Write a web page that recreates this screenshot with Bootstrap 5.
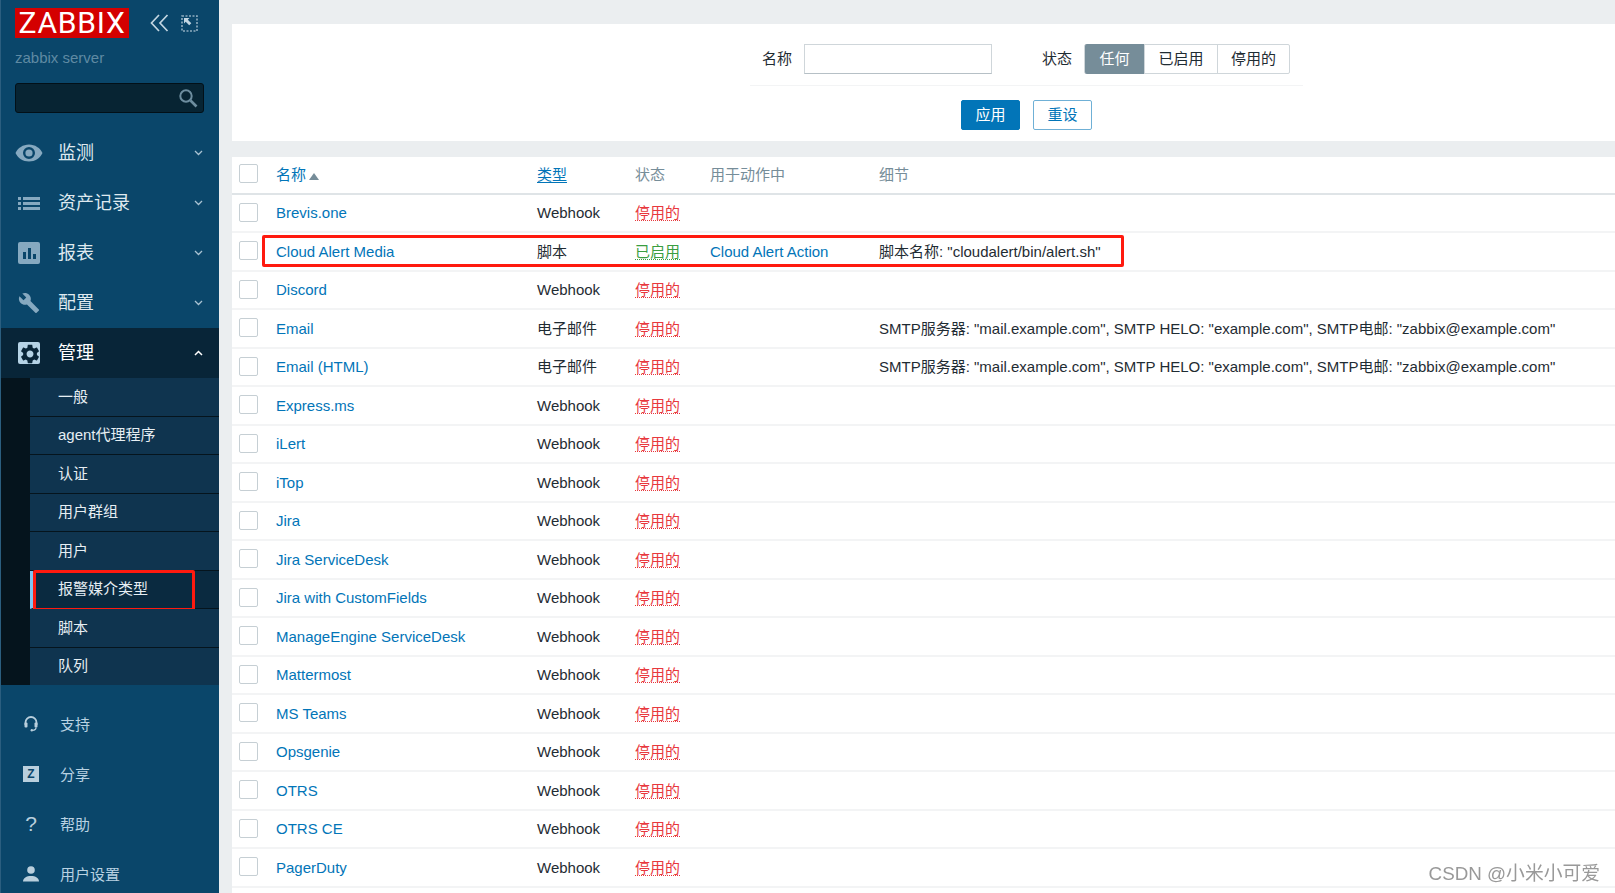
<!DOCTYPE html>
<html lang="zh-CN">
<head>
  <meta charset="UTF-8" />
  <meta name="viewport" content="width=device-width, initial-scale=1.0" />
  <title>报警媒介类型</title>
  <link href="https://cdn.jsdelivr.net/npm/bootstrap@5.3.2/dist/css/bootstrap.min.css" rel="stylesheet">
  <style>
    html, body { height: 893px; overflow: hidden; }
    body { background: #ebeef0; color: #1f2c33; font: 15px/20px "Liberation Sans", "Noto Sans CJK SC", sans-serif; }
    a { text-decoration: none; color: #0275b8; }

    /* sidebar */
    .side { width: 219px; height: 893px; flex: none; background: #0a466a; border-left: 1px solid #2b5e7f; overflow: hidden; }
    .side-top { padding: 8px 15px 0 14px; }
    .logo { width: 114px; height: 30px; flex: none; background: #d40000; color: #fff; font: 400 30px/30px Roboto, "Liberation Sans", sans-serif; text-align: center; letter-spacing: .8px; }
    .ico-collapse { margin-left: 21px; }
    .ico-expand { margin-left: 12px; }
    .server-name { color: #5f8aa3; font-size: 15px; margin-top: 10px; }
    .side-search { height: 30px; margin-top: 15px; background: #072433; border: 1px solid #021018; border-radius: 3px; padding-right: 4px; }
    .side-nav { margin-top: 15px; }
    .menu-item { height: 50px; color: #dfe9ef; font-size: 18px; padding-left: 57px; padding-right: 16px; position: relative; }
    .menu-item.open { background: #082538; color: #fff; }
    .menu-ico { position: absolute; left: 17px; top: 14px; width: 22px; height: 22px; }
    .menu-ico.wide { left: 14px; width: 28px; }
    .sub-wrap { background: #05141d; padding-left: 29px; }
    .sub-item { height: 38.5px; background: #0f344f; border-bottom: 1px solid #05141d; color: #e6eef3; padding-left: 28px; position: relative; }
    .sub-item.current { background: #0a2a40; border-left: 3px solid #7fc4f0; padding-left: 25px; }
    .sub-wrap .sub-item:last-child { border-bottom: 0; height: 37.5px; }
    .user-menu { padding-top: 15px; }
    .user-item { height: 50px; color: #b9d2e2; padding-left: 59px; position: relative; }
    .user-ico { position: absolute; left: 22px; top: 16px; width: 16px; height: 16px; }
    .z-box { background: #b9cfdd; color: #0a466a; font: 700 12px/16px "Liberation Sans", sans-serif; text-align: center; }
    .q-mark { color: #b9cfdd; font: 400 21px/16px "Liberation Sans", sans-serif; text-align: center; }

    /* filter */
    .content { padding-left: 13px; min-width: 0; position: relative; }
    .filter-box { margin-top: 24px; height: 117px; background: #fff; padding: 20px 0 0 518px; }
    .filter-inner { width: 553px; }
    .filter-row { height: 42px; border-bottom: 1px solid #f3f4f5; padding-bottom: 11px; }
    .filter-input { width: 188px; height: 30px; margin-left: 12px; margin-right: 50px; border: 1px solid #cfd6da; border-bottom-color: #b6c0c6; background: #fff; }
    .seg-group { margin-left: 12px; border: 1px solid #cfd6da; border-radius: 2px; height: 30px; }
    .seg-btn { padding: 0; height: 28px; line-height: 28px; text-align: center; border-left: 1px solid #cfd6da; color: #1f2c33; }
    .seg-btn:first-child { border-left: 0; width: 59px; background: #768d99; color: #fff; margin: -1px 0; height: 30px; line-height: 30px; border-radius: 2px 0 0 2px; }
    .seg-mid { width: 73px; }
    .seg-last { width: 72px; }
    .filter-actions { margin-top: 14px; padding-left: 211px; gap: 13px; }
    .btn-go, .btn-undo { width: 59px; height: 30px; padding: 0; font-size: 15px; line-height: 28px; border-radius: 2px; border: 1px solid #0275b8; }
    .btn-go { background: #0275b8; color: #fff; }
    .btn-undo { background: #fff; color: #0275b8; border-color: #6fb0d6; }

    /* table */
    .tbl-box { margin-top: 16px; background: #fff; height: 736px; overflow: hidden; }
    .media-tbl { width: 1383px; table-layout: fixed; border-collapse: separate; border-spacing: 0; margin: 0; }
    .media-tbl th, .media-tbl td { padding: 0; background: #fff; box-shadow: none; vertical-align: middle; font-weight: 400; white-space: nowrap; color: #1f2c33; }
    .media-tbl th { height: 37.5px; border-bottom: 2px solid #dfe4e7; color: #768d99; }
    .media-tbl td { height: 38.5px; border-bottom: 2px solid #f3f4f5; padding-top: 1px; }
    .c-check { width: 44px; }
    .c-name { width: 261px; }
    .c-type { width: 98px; }
    .c-state { width: 75px; }
    .c-act { width: 169px; }
    .fake-check { display: block; width: 19px; height: 19px; margin: -2px 0 0 7px; border: 1px solid #c6cfd4; border-radius: 2px; background: #fff; }
    .sort-up { display: inline-block; width: 0; height: 0; margin-left: 3px; border: 5px solid transparent; border-top: 0; border-bottom: 7px solid #768d99; }
    .media-tbl th a.ul { text-decoration: underline; text-decoration-thickness: 1px; text-underline-offset: 2px; }
    .off, .media-tbl td.off { color: #e8383d; }
    .on, .media-tbl td.on { color: #3a9e41; }
    .off span, .on span { text-decoration: underline dotted; text-decoration-thickness: 1px; text-underline-offset: 2px; }

    /* screenshot markup */
    .red-row { position: absolute; left: 43px; top: 235px; width: 862px; height: 32px; border: 3px solid #ff1a0f; border-radius: 2px; pointer-events: none; }
    .red-menu { position: absolute; left: 0; top: -1px; width: 162px; height: 41px; border: 3px solid #ff1a0f; border-radius: 2px; pointer-events: none; }
    .watermark { position: fixed; right: 15px; bottom: 7px; color: #999; font-size: 18.8px; line-height: 24px; }
  </style>
</head>
<body class="d-flex">
  <aside class="side">
    <div class="side-top">
      <div class="d-flex align-items-center">
        <div class="logo">ZABBIX</div>
        <svg class="ico-collapse" width="19" height="20" viewBox="0 0 19 20" fill="none" stroke="#c3d6e2" stroke-width="1.7"><path d="M9 2 1.500 10 9 18M17.500 2 10 10l7.500 8"/></svg>
        <svg class="ico-expand" width="17" height="17" viewBox="0 0 17 17" fill="none"><rect x="1" y="1" width="15" height="15" stroke="#8fadc0" stroke-width="1.600" stroke-dasharray="2 1.500"/><path d="M3 3h5.500L6.800 4.700l3.500 3.500-2.100 2.100-3.500-3.500L3 8.500z" fill="#c3d6e2"/></svg>
      </div>
      <div class="server-name">zabbix server</div>
      <div class="side-search d-flex align-items-center justify-content-end">
        <svg width="22" height="22" viewBox="0 0 22 22" fill="none" stroke="#6d8d9f"><circle cx="9" cy="9" r="5.700" stroke-width="2"/><path d="m13.500 13.500 6 6" stroke-width="2.600"/></svg>
      </div>
    </div>

    <nav class="side-nav">
      <div class="menu-item d-flex align-items-center justify-content-between">
        <svg class="menu-ico wide" viewBox="0 0 28 22" fill="#86a9c0"><path fill-rule="evenodd" d="M14 2.500C8 2.500 2.800 6 .5 11c2.300 5 7.500 8.500 13.500 8.500S25.200 16 27.500 11C25.200 6 20 2.500 14 2.500zM14 17a6 6 0 1 1 0-12 6 6 0 0 1 0 12z"/><circle cx="14" cy="11" r="3.600"/></svg>
        <span>监测</span>
        <svg width="9" height="6" viewBox="0 0 9 6" fill="none" stroke="#a9c2d2" stroke-width="1.300"><path d="m1 1 3.500 3.500L8 1"/></svg>
      </div>
      <div class="menu-item d-flex align-items-center justify-content-between">
        <svg class="menu-ico" viewBox="0 0 22 22" fill="#86a9c0"><rect x="0" y="5" width="3" height="3"/><rect x="5" y="5" width="17" height="3"/><rect x="0" y="10" width="3" height="3"/><rect x="5" y="10" width="17" height="3"/><rect x="0" y="15" width="3" height="3"/><rect x="5" y="15" width="17" height="3"/></svg>
        <span>资产记录</span>
        <svg width="9" height="6" viewBox="0 0 9 6" fill="none" stroke="#a9c2d2" stroke-width="1.300"><path d="m1 1 3.500 3.500L8 1"/></svg>
      </div>
      <div class="menu-item d-flex align-items-center justify-content-between">
        <svg class="menu-ico" viewBox="0 0 22 22"><rect width="22" height="22" rx="2" fill="#86a9c0"/><path d="M5 10h3v7H5zM10 6h3v11h-3zM15 12h3v5h-3z" fill="#0a466a"/></svg>
        <span>报表</span>
        <svg width="9" height="6" viewBox="0 0 9 6" fill="none" stroke="#a9c2d2" stroke-width="1.300"><path d="m1 1 3.500 3.500L8 1"/></svg>
      </div>
      <div class="menu-item d-flex align-items-center justify-content-between">
        <svg class="menu-ico" viewBox="0 0 24 24" fill="#86a9c0"><path d="M22.700 19l-9.100-9.100c.9-2.300.4-5-1.500-6.900-2-2-5-2.400-7.400-1.300L9 6 6 9 1.600 4.700C.4 7.100.9 10.100 2.900 12.100c1.900 1.900 4.600 2.400 6.900 1.500l9.100 9.100c.4.4 1 .4 1.400 0l2.300-2.300c.5-.4.5-1.100.1-1.400z"/></svg>
        <span>配置</span>
        <svg width="9" height="6" viewBox="0 0 9 6" fill="none" stroke="#a9c2d2" stroke-width="1.300"><path d="m1 1 3.500 3.500L8 1"/></svg>
      </div>
      <div class="menu-item open d-flex align-items-center justify-content-between">
        <svg class="menu-ico" viewBox="0 0 22 22"><rect width="22" height="22" rx="2" fill="#b5d3e6"/><g transform="translate(.5 .5) scale(.96)"><path fill="#082538" d="M19.140 12.940c.04-.3.06-.61.06-.94 0-.32-.02-.64-.07-.94l2.030-1.580c.18-.14.23-.41.12-.61l-1.920-3.320c-.12-.22-.37-.29-.59-.22l-2.390.96c-.5-.38-1.030-.7-1.620-.94l-.36-2.540c-.04-.24-.24-.41-.48-.41h-3.840c-.24 0-.43.17-.47.41l-.36 2.540c-.59.24-1.130.57-1.620.94l-2.390-.96c-.22-.08-.47 0-.59.22L2.740 8.870c-.12.21-.08.47.12.61l2.030 1.580c-.05.3-.09.63-.09.94s.02.64.07.94l-2.030 1.580c-.18.14-.23.41-.12.61l1.920 3.320c.12.22.37.29.59.22l2.390-.96c.5.38 1.030.7 1.620.94l.36 2.540c.05.24.24.41.48.41h3.840c.24 0 .44-.17.47-.41l.36-2.540c.59-.24 1.130-.56 1.620-.94l2.390.96c.22.08.47 0 .59-.22l1.920-3.320c.12-.22.07-.47-.12-.61l-2.010-1.580zM12 15.600c-1.980 0-3.600-1.620-3.600-3.600s1.620-3.600 3.600-3.600 3.600 1.620 3.600 3.600-1.620 3.600-3.600 3.600z"/></g></svg>
        <span>管理</span>
        <svg width="9" height="6" viewBox="0 0 9 6" fill="none" stroke="#fff" stroke-width="1.500"><path d="m1 5 3.500-3.500L8 5"/></svg>
      </div>
      <div class="sub-wrap">
        <div class="sub-item d-flex align-items-center">一般</div>
        <div class="sub-item d-flex align-items-center">agent代理程序</div>
        <div class="sub-item d-flex align-items-center">认证</div>
        <div class="sub-item d-flex align-items-center">用户群组</div>
        <div class="sub-item d-flex align-items-center">用户</div>
        <div class="sub-item current d-flex align-items-center">报警媒介类型<div class="red-menu"></div></div>
        <div class="sub-item d-flex align-items-center">脚本</div>
        <div class="sub-item d-flex align-items-center">队列</div>
      </div>
    </nav>

    <div class="user-menu">
      <div class="user-item d-flex align-items-center">
        <svg class="user-ico" viewBox="0 0 16 16" fill="none" stroke="#b9cfdd" stroke-width="1.800"><path d="M2.500 9V6.500a5.500 5.500 0 0 1 11 0V9"/><rect x="1.500" y="6.500" width="3" height="5" rx="1" fill="#b9cfdd" stroke="none"/><rect x="11.500" y="6.500" width="3" height="5" rx="1" fill="#b9cfdd" stroke="none"/><path d="M13 11.500c0 2-1.500 2.800-3.500 2.800" stroke-width="1.300"/><circle cx="8.800" cy="14.300" r="1.200" fill="#b9cfdd" stroke="none"/></svg>
        <span>支持</span>
      </div>
      <div class="user-item d-flex align-items-center">
        <div class="user-ico z-box">Z</div>
        <span>分享</span>
      </div>
      <div class="user-item d-flex align-items-center">
        <div class="user-ico q-mark">?</div>
        <span>帮助</span>
      </div>
      <div class="user-item d-flex align-items-center">
        <svg class="user-ico" viewBox="0 0 16 16" fill="#b9cfdd"><circle cx="8" cy="4" r="3.800"/><path d="M0 15.500c0-3.500 3.500-5.500 8-5.500s8 2 8 5.500z"/></svg>
        <span>用户设置</span>
      </div>
    </div>
  </aside>

  <main class="content flex-grow-1">
    <div class="filter-box">
      <div class="filter-inner">
        <div class="filter-row d-flex align-items-start">
          <span class="ms-2 ps-1 lh-lg">名称</span>
          <input class="filter-input" type="text">
          <span class="lh-lg">状态</span>
          <div class="seg-group d-flex">
            <div class="seg-btn">任何</div>
            <div class="seg-btn seg-mid">已启用</div>
            <div class="seg-btn seg-last">停用的</div>
          </div>
        </div>
        <div class="filter-actions d-flex">
          <button class="btn btn-go" type="button">应用</button>
          <button class="btn btn-undo" type="button">重设</button>
        </div>
      </div>
    </div>

    <div class="tbl-box">
      <table class="table media-tbl">
        <thead>
          <tr>
            <th class="c-check"><span class="fake-check"></span></th>
            <th class="c-name"><a href="#">名称</a><span class="sort-up"></span></th>
            <th class="c-type"><a class="ul" href="#">类型</a></th>
            <th class="c-state">状态</th>
            <th class="c-act">用于动作中</th>
            <th>细节</th>
          </tr>
        </thead>
        <tbody>
          <tr><td><span class="fake-check"></span></td><td><a href="#">Brevis.one</a></td><td>Webhook</td><td class="off"><span>停用的</span></td><td></td><td></td></tr>
          <tr><td><span class="fake-check"></span></td><td><a href="#">Cloud Alert Media</a></td><td>脚本</td><td class="on"><span>已启用</span></td><td><a href="#">Cloud Alert Action</a></td><td>脚本名称: "cloudalert/bin/alert.sh"</td></tr>
          <tr><td><span class="fake-check"></span></td><td><a href="#">Discord</a></td><td>Webhook</td><td class="off"><span>停用的</span></td><td></td><td></td></tr>
          <tr><td><span class="fake-check"></span></td><td><a href="#">Email</a></td><td>电子邮件</td><td class="off"><span>停用的</span></td><td></td><td>SMTP服务器: "mail.example.com", SMTP HELO: "example.com", SMTP电邮: "zabbix@example.com"</td></tr>
          <tr><td><span class="fake-check"></span></td><td><a href="#">Email (HTML)</a></td><td>电子邮件</td><td class="off"><span>停用的</span></td><td></td><td>SMTP服务器: "mail.example.com", SMTP HELO: "example.com", SMTP电邮: "zabbix@example.com"</td></tr>
          <tr><td><span class="fake-check"></span></td><td><a href="#">Express.ms</a></td><td>Webhook</td><td class="off"><span>停用的</span></td><td></td><td></td></tr>
          <tr><td><span class="fake-check"></span></td><td><a href="#">iLert</a></td><td>Webhook</td><td class="off"><span>停用的</span></td><td></td><td></td></tr>
          <tr><td><span class="fake-check"></span></td><td><a href="#">iTop</a></td><td>Webhook</td><td class="off"><span>停用的</span></td><td></td><td></td></tr>
          <tr><td><span class="fake-check"></span></td><td><a href="#">Jira</a></td><td>Webhook</td><td class="off"><span>停用的</span></td><td></td><td></td></tr>
          <tr><td><span class="fake-check"></span></td><td><a href="#">Jira ServiceDesk</a></td><td>Webhook</td><td class="off"><span>停用的</span></td><td></td><td></td></tr>
          <tr><td><span class="fake-check"></span></td><td><a href="#">Jira with CustomFields</a></td><td>Webhook</td><td class="off"><span>停用的</span></td><td></td><td></td></tr>
          <tr><td><span class="fake-check"></span></td><td><a href="#">ManageEngine ServiceDesk</a></td><td>Webhook</td><td class="off"><span>停用的</span></td><td></td><td></td></tr>
          <tr><td><span class="fake-check"></span></td><td><a href="#">Mattermost</a></td><td>Webhook</td><td class="off"><span>停用的</span></td><td></td><td></td></tr>
          <tr><td><span class="fake-check"></span></td><td><a href="#">MS Teams</a></td><td>Webhook</td><td class="off"><span>停用的</span></td><td></td><td></td></tr>
          <tr><td><span class="fake-check"></span></td><td><a href="#">Opsgenie</a></td><td>Webhook</td><td class="off"><span>停用的</span></td><td></td><td></td></tr>
          <tr><td><span class="fake-check"></span></td><td><a href="#">OTRS</a></td><td>Webhook</td><td class="off"><span>停用的</span></td><td></td><td></td></tr>
          <tr><td><span class="fake-check"></span></td><td><a href="#">OTRS CE</a></td><td>Webhook</td><td class="off"><span>停用的</span></td><td></td><td></td></tr>
          <tr><td><span class="fake-check"></span></td><td><a href="#">PagerDuty</a></td><td>Webhook</td><td class="off"><span>停用的</span></td><td></td><td></td></tr>
        </tbody>
      </table>
    </div>
    <div class="red-row"></div>
    <div class="watermark">CSDN @小米小可爱</div>
  </main>
  <script src="https://cdn.jsdelivr.net/npm/bootstrap@5.3.2/dist/js/bootstrap.bundle.min.js"></script>
</body>
</html>
